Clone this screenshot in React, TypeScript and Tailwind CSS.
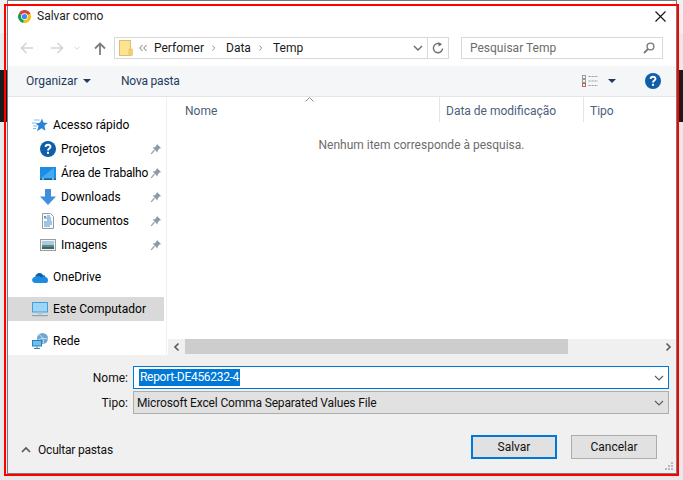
import React from "react";

const Chrome = () => (
  <svg width="15" height="15" viewBox="0 0 24 24" className="shrink-0">
    <path d="M12 12 L3 7 A10.5 10.5 0 0 1 21.5 7.5 Z" fill="#db4437" />
    <path d="M12 12 L21.5 7.5 A10.5 10.5 0 0 1 10 22.3 Z" fill="#f4c20d" />
    <path d="M12 12 L10 22.3 A10.5 10.5 0 0 1 3 7 Z" fill="#0f9d58" />
    <circle cx="12" cy="12" r="5.4" fill="#fff" />
    <circle cx="12" cy="12" r="4.2" fill="#4285f4" />
  </svg>
);

const Pin = () => (
  <svg width="12" height="12" viewBox="0 0 12 12" className="shrink-0">
    <path d="M7 1 L11 5 L9.6 5.6 L7.8 7.4 L7.4 9.6 L2.6 4.6 L4.8 4.2 L6.4 2.4 Z" fill="#8f9aa6" />
    <path d="M4.4 7.2 L1.2 10.8" stroke="#8f9aa6" strokeWidth="1.2" />
  </svg>
);

const Help = ({ s = 16 }: { s?: number }) => (
  <svg width={s} height={s} viewBox="0 0 16 16" className="shrink-0">
    <circle cx="8" cy="8" r="8" fill="#0f5ea8" />
    <path d="M5.6 6 C5.7 3 10.5 3 10.5 5.8 C10.5 7.6 8 7.6 8 9.6" fill="none" stroke="#fff" strokeWidth="1.9" />
    <rect x="7" y="10.8" width="2" height="2" fill="#fff" />
  </svg>
);

const Star = () => (
  <svg width="16" height="14" viewBox="0 0 16 14" className="shrink-0">
    <path d="M10 0.5 L11.4 4.6 L15.6 4.9 L12.4 7.8 L13.4 12.8 L9.6 10.2 L5 13.2 L6.6 8 L3.6 5.4 L8 4.8 Z" fill="#2a82d6" />
    <path d="M2 2 H7.5 M0 5 H4 M1 8 H5 M1 10.5 H4" stroke="#7dbdec" strokeWidth="1.1" />
  </svg>
);

const Desktop = () => (
  <svg width="16" height="13" viewBox="0 0 16 13" className="shrink-0">
    <rect width="16" height="13" fill="#1b8fe6" />
    <path d="M1 11 L14 1 V11 Z" fill="#47a9f0" />
    <rect y="11.6" width="16" height="1.4" fill="#0b5fa8" />
    <path d="M2 12 H4 M12 12 H14" stroke="#d9efff" strokeWidth="1" />
  </svg>
);

const Download = () => (
  <svg width="16" height="16" viewBox="0 0 16 16" className="shrink-0">
    <path d="M5 0 H11 V7.5 H16 L8 16 L0 7.5 H5 Z" fill="#3f8fdd" />
  </svg>
);

const Doc = () => (
  <svg width="12" height="16" viewBox="0 0 12 16" className="shrink-0">
    <path d="M.5.5 H8.5 L11.5 3.5 V15.5 H.5 Z" fill="#fbfbfb" stroke="#9a9a9a" />
    <path d="M5 3 H8 M2 5 H9 M5 7 H9 M2 9 H10 M2 11 H10 M2 13 H8" stroke="#3d8fd9" strokeWidth="1" />
    <rect x="2" y="3" width="2" height="1.5" fill="#7f7f7f" />
  </svg>
);

const Pic = () => (
  <svg width="16" height="12" viewBox="0 0 16 12" className="shrink-0">
    <rect x=".5" y=".5" width="15" height="11" fill="#f2f2f2" stroke="#9c9c9c" />
    <rect x="2" y="2" width="12" height="4" fill="#a8cbe4" />
    <rect x="2" y="6" width="12" height="2" fill="#5b8f74" />
    <rect x="2" y="8" width="12" height="2" fill="#47606b" />
  </svg>
);

const Cloud = () => (
  <svg width="16" height="11" viewBox="0 0 16 11" className="shrink-0">
    <path d="M3.2 4.8 C3.8 1 9.4 -.6 11 3.4 C12 2.8 13 3.2 13.2 4.6 L6 8 Z" fill="#0b5ea8" />
    <path d="M3.5 11 C-1 11 -1 5.4 3.2 4.8 C5 3.4 8 3.6 9 5.4 C11 3.6 16.4 4.6 16 8.4 C16 10 15 11 13.4 11 Z" fill="#1e8be0" />
  </svg>
);

const Computer = () => (
  <svg width="16" height="15" viewBox="0 0 16 15" className="shrink-0">
    <rect width="16" height="10.5" fill="#3fa0e0" />
    <rect x="1" y="1" width="14" height="8.5" fill="#9fd4f5" />
    <rect x="6" y="10.5" width="4" height="2" fill="#b5c4d0" />
    <rect y="13" width="16" height="1.2" fill="#8aa5bb" />
  </svg>
);

const Net = () => (
  <svg width="16" height="16" viewBox="0 0 16 16" className="shrink-0">
    <circle cx="10.5" cy="5.5" r="5.5" fill="#6fa6cf" />
    <path d="M7 2 C10 3 12 6 11.5 10.6 M6 7 C9 5 12 5 15.8 6" stroke="#d6e8f4" strokeWidth=".8" fill="none" />
    <rect x="0" y="7" width="10" height="6.5" fill="#2a7fbf" />
    <rect x="1" y="8" width="8" height="4.5" fill="#6cc0ef" />
    <path d="M5 13.5 V15 M2 15.5 H8" stroke="#5b7b93" strokeWidth="1" />
  </svg>
);

const Chev = ({ d, c = "#5a5a5a", w = 10, sw = 1.2 }: { d: string; c?: string; w?: number; sw?: number }) => (
  <svg width={w} height={w} viewBox="0 0 10 10" className="shrink-0">
    <path d={d} fill="none" stroke={c} strokeWidth={sw} />
  </svg>
);

const Row = ({ icon, label, pin, sub, active, tight }: { icon: React.ReactNode; label: string; pin?: boolean; sub?: boolean; active?: boolean; tight?: boolean }) => (
  <div className={`relative h-6 w-[156px] flex items-center shrink-0 ${active ? "bg-[#d9d9d9]" : ""}`}>
    <div className={`flex justify-center items-center shrink-0 ${sub ? "w-[16px] ml-[32px] mr-[5px]" : "w-[16px] ml-[24px] mr-[5px]"}`}>{icon}</div>
    <span className={`whitespace-nowrap text-black ${tight ? "tracking-[-0.2px]" : ""}`}>{label}</span>
    {pin && <span className="absolute left-[142px] top-[6px]"><Pin /></span>}
  </div>
);

export default function App() {
  return (
    <div className="relative w-[683px] h-[480px] overflow-hidden bg-[#e9e9e9] font-['Roboto',sans-serif] text-[12px] leading-4">
      {/* page showing behind the dialog */}
      <div className="absolute left-0 right-0 top-0 h-[33px] bg-[#f1f1f1]" />
      <div className="absolute left-0 right-0 top-[70px] h-[52px] bg-[#1b1b1b]" />

      <div className="relative ml-[7px] w-[670px] h-[474px] bg-white border border-[#7a7a7a] flex flex-col">
        {/* title bar */}
        <div className="h-[32px] flex items-center pl-[9px] pr-[9px] pb-[2px] shrink-0">
          <Chrome />
          <span className="ml-[5px] text-[#222]">Salvar como</span>
          <svg width="11" height="11" viewBox="0 0 11 11" className="ml-auto mr-[1px]">
            <path d="M.5.5 L10.5 10.5 M10.5.5 L.5 10.5" stroke="#111" strokeWidth="1.1" />
          </svg>
        </div>

        {/* nav row */}
        <div className="h-[33px] flex items-center shrink-0 pb-[3px]">
          <div className="w-[106px] flex items-center shrink-0 pl-[12px]">
            <svg width="14" height="12" viewBox="0 0 14 12"><path d="M13 6 H2 M6.5 1 L1.5 6 L6.5 11" fill="none" stroke="#d4d4d4" strokeWidth="1.6" /></svg>
            <svg width="14" height="12" viewBox="0 0 14 12" className="ml-[16px]"><path d="M1 6 H12 M7.5 1 L12.5 6 L7.5 11" fill="none" stroke="#d4d4d4" strokeWidth="1.6" /></svg>
            <span className="ml-[9px]"><Chev d="M2 3.5 L5 6.5 L8 3.5" c="#d4d4d4" w={8} /></span>
            <svg width="12" height="13" viewBox="0 0 12 13" className="ml-[13px]"><path d="M6 13 V2 M1 6.5 L6 1.5 L11 6.5" fill="none" stroke="#7c7c7c" strokeWidth="1.8" /></svg>
          </div>
          <div className="w-[335px] h-[22px] border border-[#d9d9d9] flex items-center shrink-0">
            <svg width="14" height="16" viewBox="0 0 14 16" className="ml-[4px] shrink-0">
              <rect x=".5" y=".5" width="11" height="15" fill="#fce38f" stroke="#dcc06a" />
              <rect x="10" y="9" width="3.5" height="6.5" fill="#f5cf6a" stroke="#dcc06a" strokeWidth=".6" />
            </svg>
            <svg width="8" height="8" viewBox="0 0 8 8" className="ml-[6px] mr-[7px] shrink-0"><path d="M3.5 1 L.7 4 L3.5 7 M7.5 1 L4.7 4 L7.5 7" fill="none" stroke="#777" /></svg>
            <span className="text-[#1a1a1a] w-[52px]">Perfomer</span>
            <span className="ml-[4px] mr-[8px]"><Chev d="M3 2 L6 5 L3 8" c="#8a8a8a" w={8} /></span>
            <span className="text-[#1a1a1a] w-[23px]">Data</span>
            <span className="ml-[8px] mr-[8px]"><Chev d="M3 2 L6 5 L3 8" c="#8a8a8a" w={8} /></span>
            <span className="text-[#1a1a1a]">Temp</span>
            <span className="ml-auto mr-[4px]"><Chev d="M1 3 L5 7 L9 3" c="#6b6b6b" sw={1.4} /></span>
            <div className="w-[21px] h-full border-l border-[#d9d9d9] flex items-center justify-center">
              <svg width="12" height="12" viewBox="0 0 12 12"><path d="M8.8 2.4 A4.6 4.6 0 1 0 10.6 6.5" fill="none" stroke="#707070" strokeWidth="1.4" /><path d="M6.5 0 L10 2.6 L6.5 4.4 Z" fill="#707070" /></svg>
            </div>
          </div>
          <div className="ml-[12px] w-[202px] h-[22px] border border-[#d9d9d9] flex items-center pl-[8px] pr-[7px] shrink-0">
            <span className="text-[#6d6d6d]">Pesquisar Temp</span>
            <svg width="12" height="12" viewBox="0 0 12 12" className="ml-auto"><circle cx="7.5" cy="4.5" r="3.4" fill="none" stroke="#7a7a7a" strokeWidth="1.4" /><path d="M5 7 L1 11" stroke="#7a7a7a" strokeWidth="1.8" /></svg>
          </div>
        </div>

        {/* toolbar */}
        <div className="h-[31px] bg-[#f5f6f7] border-b border-[#e5e5e5] flex items-center shrink-0 text-[#1e3a5f]">
          <span className="ml-[18px] w-[55px]">Organizar</span>
          <svg width="8" height="4" viewBox="0 0 8 4" className="ml-[2px] shrink-0"><path d="M0 0 H8 L4 4 Z" fill="#1e3a5f" /></svg>
          <span className="ml-[30px] tracking-[-0.2px]">Nova pasta</span>
          <svg width="16" height="12" viewBox="0 0 16 12" className="ml-auto">
            <path d="M6.5 1.5 H16 M6.5 6 H16 M6.5 10.5 H16" stroke="#9a9a9a" strokeDasharray="2 1" />
            <rect x=".5" y=".5" width="3" height="3" fill="none" stroke="#9a9a9a" />
            <rect x=".5" y="4.5" width="3" height="3" fill="none" stroke="#9a9a9a" />
            <rect x=".5" y="8.5" width="3" height="3" fill="none" stroke="#b0655f" />
          </svg>
          <svg width="8" height="4" viewBox="0 0 8 4" className="ml-[10px]"><path d="M0 0 H8 L4 4 Z" fill="#1e3a5f" /></svg>
          <span className="ml-[29px] mr-[15px]"><Help /></span>
        </div>

        {/* main */}
        <div className="h-[258px] flex shrink-0">
          <div className="relative w-[159px] border-r border-[#f0f0f0] pt-[16px] flex flex-col shrink-0">
            <Row icon={<Star />} label="Acesso rápido" />
            <Row sub pin icon={<Help />} label="Projetos" />
            <Row sub pin tight icon={<Desktop />} label="Área de Trabalho" />
            <Row sub pin icon={<Download />} label="Downloads" />
            <Row sub pin icon={<Doc />} label="Documentos" />
            <Row sub pin icon={<Pic />} label="Imagens" />
            <div className="mt-2"><Row icon={<Cloud />} label="OneDrive" /></div>
            <div className="mt-2"><Row active icon={<Computer />} label="Este Computador" /></div>
            <div className="mt-2"><Row icon={<Net />} label="Rede" /></div>
          </div>

          <div className="flex-1 flex flex-col min-w-0">
            <div className="relative h-[25px] flex text-[#4c607a] shrink-0">
              <div className="w-[273px] pl-[18px] pt-[6px] border-r border-[#e5e5e5] shrink-0">Nome</div>
              <div className="w-[144px] pl-[6px] pt-[6px] border-r border-[#e5e5e5] shrink-0 whitespace-nowrap">Data de modificação</div>
              <div className="pl-[6px] pt-[6px]">Tipo</div>
              <svg width="9" height="5" viewBox="0 0 9 5" className="absolute left-[138px] top-0"><path d="M.5 4.5 L4.5 .5 L8.5 4.5" fill="none" stroke="#8a8a8a" /></svg>
            </div>
            <div className="flex-1 text-center text-[#6d6d6d] pt-[15px]">
              <span>Nenhum item corresponde à pesquisa.</span>
            </div>
            <div className="h-[16px] pl-[1px] flex items-stretch shrink-0">
              <div className="flex-1 bg-[#f0f0f0] flex items-center">
                <div className="w-[17px] flex justify-center"><Chev d="M6.5 1.5 L3 5 L6.5 8.5" c="#5a5a5a" sw={1.6} /></div>
                <div className="w-[383px] h-[15px] self-start bg-[#cdcdcd]" />
                <div className="ml-auto w-[17px] flex justify-center"><Chev d="M3.5 1.5 L7 5 L3.5 8.5" c="#5a5a5a" sw={1.6} /></div>
              </div>
            </div>
          </div>
        </div>

        {/* bottom panel */}
        <div className="flex-1 bg-[#f0f0f0] flex flex-col relative">
          <div className="flex items-center mt-[11px] h-[23px]">
            <span className="w-[120px] text-right text-[#111]">Nome:</span>
            <div className="ml-[5px] w-[536px] h-[23px] border border-[#0078d7] bg-white flex items-center pl-[5px] pr-[4px]">
              <span className="bg-[#0078d7] text-white h-[17px] leading-[17px] px-[1px] tracking-[-0.3px]">Report-DE456232-4</span>
              <span className="ml-auto"><Chev d="M1 3 L5 7 L9 3" c="#606060" /></span>
            </div>
          </div>
          <div className="flex items-center mt-[2px] h-[23px]">
            <span className="w-[120px] text-right text-[#111]">Tipo:</span>
            <div className="ml-[5px] w-[536px] h-[23px] border border-[#adadad] bg-[#e1e1e1] flex items-center pl-[3px] pr-[4px]">
              <span className="text-[#111] tracking-[-0.15px]">Microsoft Excel Comma Separated Values File</span>
              <span className="ml-auto"><Chev d="M1 3 L5 7 L9 3" c="#606060" /></span>
            </div>
          </div>
          <div className="flex items-center mt-[21px] h-[24px]">
            <span className="ml-[13px] mt-[6px]"><Chev d="M1 7 L5 3 L9 7" c="#555" sw={1.6} /></span>
            <span className="ml-[7px] mt-[6px] text-[#111] tracking-[-0.2px]">Ocultar pastas</span>
            <button className="ml-auto w-[86px] h-[24px] border-2 border-[#0078d7] bg-[#e1e1e1] text-[#111]">Salvar</button>
            <button className="ml-[14px] mr-[19px] w-[86px] h-[24px] border border-[#adadad] bg-[#e1e1e1] text-[#111]">Cancelar</button>
          </div>
          <svg width="10" height="10" viewBox="0 0 10 10" className="absolute right-[2px] bottom-[1px]">
            <path d="M7 0 h2 v2 h-2 Z M4 3 h2 v2 h-2 Z M7 3 h2 v2 h-2 Z M1 6 h2 v2 h-2 Z M4 6 h2 v2 h-2 Z M7 6 h2 v2 h-2 Z" fill="#b9b9b9" />
          </svg>
        </div>
      </div>

      {/* red annotation rectangle */}
      <div className="absolute left-[4px] top-[4px] w-[675px] h-[472px] border-2 border-[#ff0000] pointer-events-none" />
    </div>
  );
}
